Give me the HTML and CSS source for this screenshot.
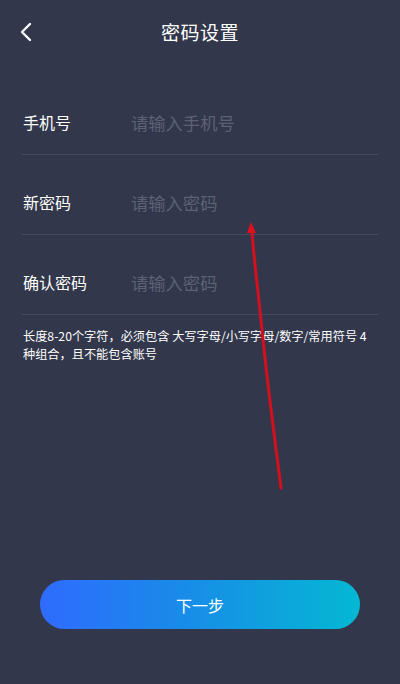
FILE: index.html
```html
<!DOCTYPE html>
<html lang="zh">
<head>
    <meta charset="utf-8"/>
    <meta content="width=device-width, initial-scale=1" name="viewport"/>
    <title>密码设置</title>
    <link rel="stylesheet" href="styles.css">
</head>
<body>
    <div class="page">
        <header class="topbar">
            <a href="#" class="back">
                <svg width="14" height="20" viewBox="0 0 14 20">
                    <path d="M11 2 L3 10 L11 18" fill="none" stroke="#fff" stroke-width="2.4" stroke-linecap="round" stroke-linejoin="round"/>
                </svg>
            </a>
            <h1>密码设置</h1>
        </header>
        <form class="form">
            <label class="row">
                <span class="label">手机号</span>
                <input type="text" placeholder="请输入手机号">
            </label>
            <label class="row">
                <span class="label">新密码</span>
                <input type="password" placeholder="请输入密码">
            </label>
            <label class="row">
                <span class="label">确认密码</span>
                <input type="password" placeholder="请输入密码">
            </label>
            <p class="hint">长度8-20个字符，必须包含 大写字母/小写字母/数字/常用符号 4种组合，且不能包含账号</p>
        </form>
        <div class="footer">
            <a href="#" class="button">下一步</a>
        </div>
        <!-- 标注箭头 -->
        <svg class="mark" width="400" height="684" viewBox="0 0 400 684">
            <path d="M281 488 C275 440 268 390 262 330 C258 290 254 260 252 232" fill="none" stroke="#d4101c" stroke-width="3" stroke-linecap="round"/>
            <path d="M251 222 L247 233 L256 233 Z" fill="#e0101c"/>
        </svg>
    </div>
</body>
</html>
```
FILE: styles.css
```css
* {
    box-sizing: border-box;
}
body, html {
    margin: 0;
    padding: 0;
    height: 100%;
    background: #32374b;
    font-family: "Noto Sans CJK SC", "Noto Sans", sans-serif;
    color: #fff;
}
.page {
    position: relative;
    height: 684px;
    display: flex;
    flex-direction: column;
    overflow: hidden;
}
.topbar {
    height: 62px;
    display: flex;
    align-items: center;
    justify-content: center;
    position: relative;
}
.topbar h1 {
    margin: 0;
    font-size: 19px;
    font-weight: 400;
    letter-spacing: 0.5px;
}
.back {
    position: absolute;
    left: 19px;
    top: 22px;
    display: flex;
}
.form {
    padding: 13px 22px 0;
    display: flex;
    flex-direction: column;
}
.row {
    height: 80px;
    display: flex;
    align-items: center;
    border-bottom: 1px solid #414a5e;
    padding-top: 15px;
}
.label {
    width: 109px;
    padding-left: 1px;
    font-size: 16px;
}
.row input {
    flex: 1;
    background: transparent;
    border: none;
    outline: none;
    color: #fff;
    font-family: inherit;
    font-size: 17.3px;
    padding: 0;
}
.row input::placeholder {
    color: #5c6273;
}
.hint {
    margin: 12px 0 0;
    padding-left: 1px;
    font-size: 12.2px;
    line-height: 18px;
}
.footer {
    margin-top: auto;
    padding: 0 40px 55px;
}
.button {
    display: flex;
    align-items: center;
    justify-content: center;
    height: 49px;
    border-radius: 25px;
    background: linear-gradient(90deg, #2f6bff, #1a88ea 40%, #04b8d3);
    color: #fff;
    text-decoration: none;
    font-size: 16px;
}
.mark {
    position: absolute;
    left: 0;
    top: 0;
    pointer-events: none;
}
```
